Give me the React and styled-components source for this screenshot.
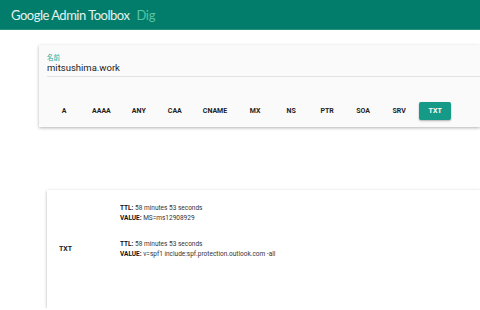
import React from "react";
import styled, { createGlobalStyle } from "styled-components";

const types = ["A", "AAAA", "ANY", "CAA", "CNAME", "MX", "NS", "PTR", "SOA", "SRV", "TXT"];

const records = [
  { ttl: "58 minutes 53 seconds", value: "MS=ms12908929" },
  { ttl: "58 minutes 53 seconds", value: "v=spf1 include:spf.protection.outlook.com -all" },
];

const App = () => {
  return (
    <>
      <GlobalStyle />
      <Header>
        <Title>Google Admin Toolbox</Title>
        <SubTitle>Dig</SubTitle>
      </Header>
      <Main>
        <QueryCard>
          <Field>
            <Label>名前</Label>
            <Input>mitsushima.work</Input>
          </Field>
          <TypeRow>
            {types.map((t) => (
              <TypeButton key={t} $active={t === "TXT"}>
                {t}
              </TypeButton>
            ))}
          </TypeRow>
        </QueryCard>
        <ResultCard>
          <TypeCell>TXT</TypeCell>
          <RecordList>
            {records.map((r, i) => (
              <Record key={i}>
                <Line>
                  <b>TTL:</b> {r.ttl}
                </Line>
                <Line>
                  <b>VALUE:</b> {r.value}
                </Line>
              </Record>
            ))}
          </RecordList>
        </ResultCard>
      </Main>
    </>
  );
};

const GlobalStyle = createGlobalStyle`
  body {
    margin: 0;
    background: #fff;
    font-family: Roboto, "Noto Sans CJK JP", sans-serif;
    overflow: hidden;
  }
`;

const Header = styled.div`
  height: 30px;
  background-color: #037d6b;
  border-bottom: 1px solid #2b9080;
  display: flex;
  align-items: center;
  padding-left: 11px;
  gap: 7px;
  box-sizing: border-box;
`;

const Title = styled.span`
  font-family: Lato, sans-serif;
  font-size: 13px;
  color: #e4f2ee;
  letter-spacing: -0.5px;
`;

const SubTitle = styled.span`
  font-family: Lato, sans-serif;
  font-size: 13px;
  color: #55c6a4;
  letter-spacing: -0.3px;
`;

const Main = styled.div`
  display: flex;
  flex-direction: column;
  align-items: flex-start;
`;

const QueryCard = styled.div`
  margin: 15px 0 0 39px;
  width: calc(100vw - 39px);
  height: 82px;
  background: #fafafa;
  box-shadow: 0 1px 3px rgba(0, 0, 0, 0.3);
  padding: 9px 0 0 8px;
  box-sizing: border-box;
`;

const Field = styled.div`
  border-bottom: 1px solid #e3e3e3;
  padding-bottom: 2px;
`;

const Label = styled.div`
  font-size: 6.5px;
  line-height: 8px;
  color: #1fa893;
`;

const Input = styled.div`
  font-size: 9.5px;
  line-height: 12px;
  color: #222;
`;

const TypeRow = styled.div`
  display: flex;
  gap: 4px;
  margin-top: 25px;
  margin-left: 1px;
`;

const TypeButton = styled.div`
  min-width: 32px;
  height: 18px;
  padding: 0 8px;
  box-sizing: border-box;
  display: flex;
  align-items: center;
  justify-content: center;
  font-size: 7px;
  font-weight: 700;
  border-radius: 2px;
  color: ${(p) => (p.$active ? "#fff" : "#222")};
  background: ${(p) => (p.$active ? "#149a86" : "transparent")};
  box-shadow: ${(p) => (p.$active ? "0 1px 2px rgba(0,0,0,0.3)" : "none")};
`;

const ResultCard = styled.div`
  margin: 63px 0 0 47px;
  width: calc(100vw - 47px);
  height: 118px;
  background: #fff;
  box-shadow: 0 1px 3px rgba(0, 0, 0, 0.3);
  display: flex;
`;

const TypeCell = styled.div`
  width: 73px;
  padding-left: 12px;
  box-sizing: border-box;
  display: flex;
  align-items: center;
  font-size: 7px;
  font-weight: 700;
  color: #222;
`;

const RecordList = styled.div`
  padding-top: 14px;
  display: flex;
  flex-direction: column;
  gap: 17px;
`;

const Record = styled.div`
  display: flex;
  flex-direction: column;
`;

const Line = styled.div`
  font-size: 6.5px;
  line-height: 9.5px;
  color: #333;
  b {
    color: #111;
  }
`;

export default App;
